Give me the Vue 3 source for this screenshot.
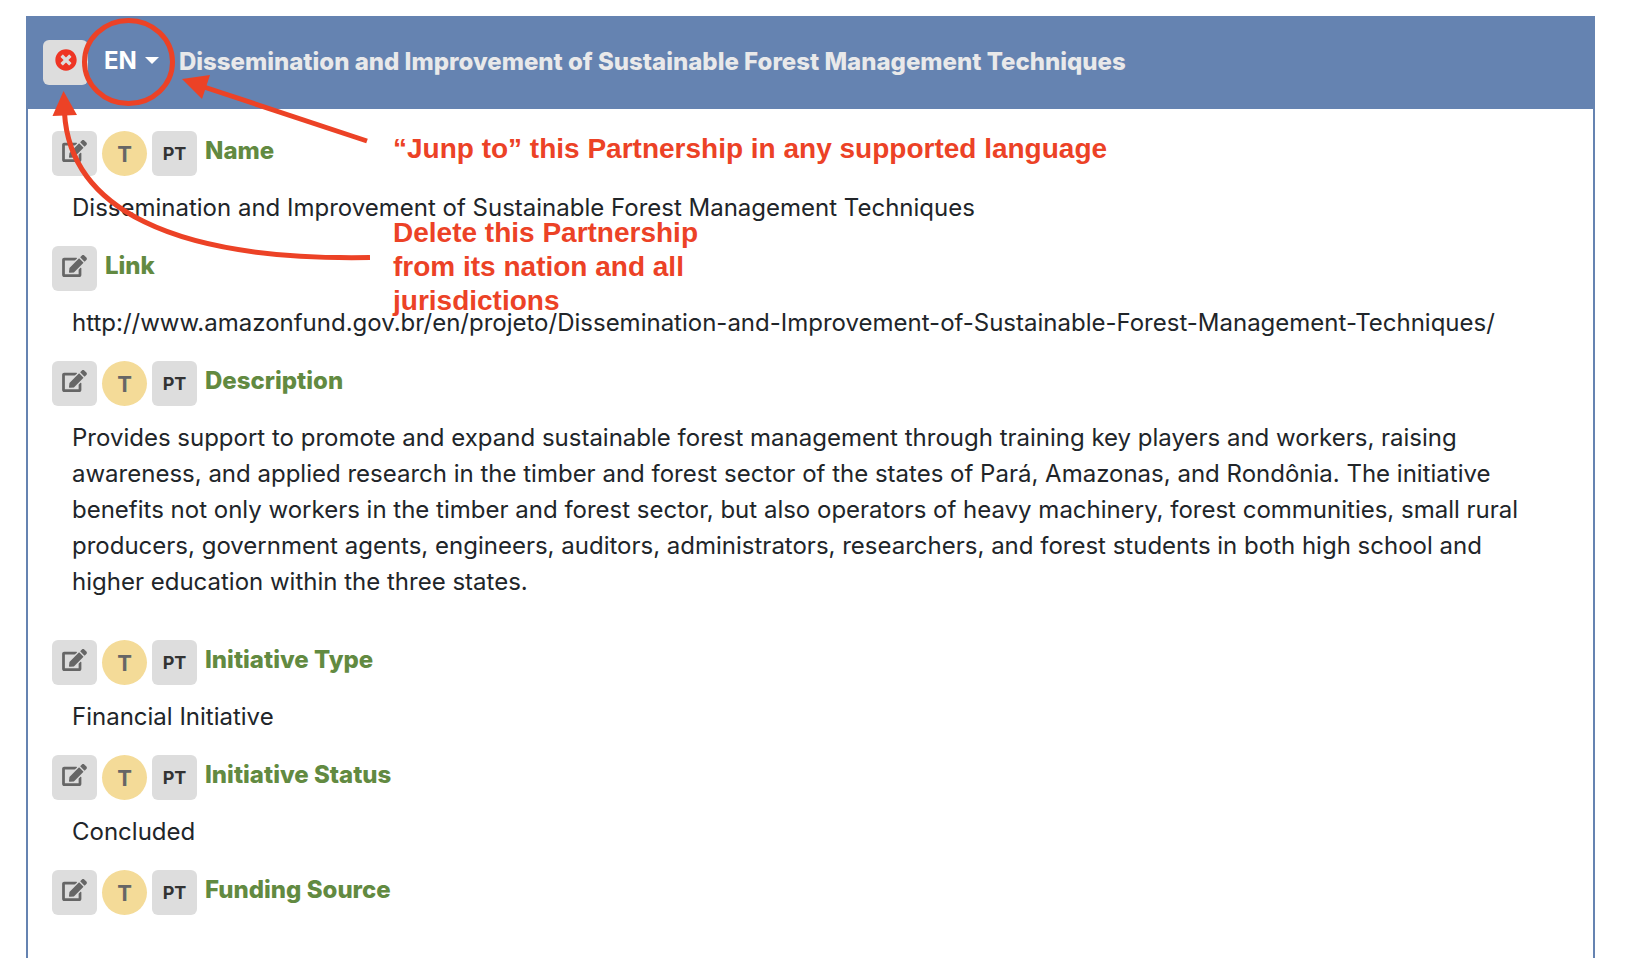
<script setup>
const title = 'Dissemination and Improvement of Sustainable Forest Management Techniques'
const link = 'http://www.amazonfund.gov.br/en/projeto/Dissemination-and-Improvement-of-Sustainable-Forest-Management-Techniques/'

const fields = [
  { label: 'Name', value: title, translatable: true },
  { label: 'Link', value: link, href: link },
  {
    label: 'Description',
    translatable: true,
    long: true,
    value:
      'Provides support to promote and expand sustainable forest management through training key players and workers, raising awareness, and applied research in the timber and forest sector of the states of Pará, Amazonas, and Rondônia. The initiative benefits not only workers in the timber and forest sector, but also operators of heavy machinery, forest communities, small rural producers, government agents, engineers, auditors, administrators, researchers, and forest students in both high school and higher education within the three states.',
  },
  { label: 'Initiative Type', value: 'Financial Initiative', translatable: true },
  { label: 'Initiative Status', value: 'Concluded', translatable: true },
  { label: 'Funding Source', value: '', translatable: true },
]
</script>

<template>
  <main class="page">
    <article class="card">
      <header class="card-header">
        <button type="button" class="tool" aria-label="Delete partnership">
          <svg class="delete-icon" viewBox="0 0 512 512" aria-hidden="true">
            <path d="M256 8C119 8 8 119 8 256s111 248 248 248 248-111 248-248S393 8 256 8zm121.6 313.1c4.7 4.7 4.7 12.3 0 17L338 377.6c-4.7 4.7-12.3 4.7-17 0L256 312l-65.1 65.6c-4.7 4.7-12.3 4.7-17 0L134.4 338c-4.7-4.7-4.7-12.3 0-17l65.6-65-65.6-65.1c-4.7-4.7-4.7-12.3 0-17l39.6-39.6c4.7-4.7 12.3-4.7 17 0l65 65.7 65.1-65.6c4.7-4.7 12.3-4.7 17 0l39.6 39.6c4.7 4.7 4.7 12.3 0 17L312 256l65.6 65.1z" />
          </svg>
        </button>
        <button type="button" class="language" aria-haspopup="menu">EN<span class="caret"></span></button>
        <h1 class="title">{{ title }}</h1>
      </header>

      <div class="card-body">
        <section v-for="field in fields" :key="field.label" class="field" :class="{ long: field.long }">
          <div class="field-head">
            <button type="button" class="tool" :aria-label="'Edit ' + field.label">
              <svg class="edit-icon" viewBox="0 0 576 512" aria-hidden="true">
                <path d="M402.6 83.2l90.2 90.2c3.8 3.8 3.8 10 0 13.8L274.4 405.6l-92.8 10.3c-12.4 1.4-22.9-9.1-21.5-21.5l10.3-92.8L388.8 83.2c3.8-3.8 10-3.8 13.8 0zm162-22.9l-48.8-48.8c-15.2-15.2-39.9-15.2-55.2 0l-35.4 35.4c-3.8 3.8-3.8 10 0 13.8l90.2 90.2c3.8 3.8 10 3.8 13.8 0l35.4-35.4c15.2-15.3 15.2-40 0-55.2zM384 346.2V448H64V128h229.8c3.2 0 6.2-1.3 8.5-3.5l40-40c7.6-7.6 2.2-20.5-8.5-20.5H48C21.5 64 0 85.5 0 112v352c0 26.5 21.5 48 48 48h352c26.5 0 48-21.5 48-48V306.2c0-10.7-12.9-16-20.5-8.5l-40 40c-2.2 2.3-3.5 5.3-3.5 8.5z" />
              </svg>
            </button>
            <template v-if="field.translatable">
              <button type="button" class="tool translate">T</button>
              <button type="button" class="tool code">PT</button>
            </template>
            <h2 class="label">{{ field.label }}</h2>
          </div>
          <p v-if="field.value" class="value">
            <a v-if="field.href" :href="field.href">{{ field.value }}</a>
            <template v-else>{{ field.value }}</template>
          </p>
        </section>
      </div>
    </article>

    <svg class="marks" width="400" height="280" viewBox="0 0 400 280" aria-hidden="true">
      <g fill="none" stroke="#ec4226" stroke-width="5">
        <ellipse cx="128.500" cy="62" rx="44" ry="41.500" />
        <path d="M367 141L204 87" />
        <path d="M370 257.500C170 261 70 207 64.500 113" />
      </g>
      <g fill="#ec4226">
        <path d="M182 79L210 75L202 99Z" />
        <path d="M63.500 91L52.500 116L77 115Z" />
      </g>
    </svg>
    <p class="note note-jump">“Junp to” this Partnership in any supported language</p>
    <p class="note note-delete">Delete this Partnership from its nation and all jurisdictions</p>
  </main>
</template>

<style>
body {
  margin: 0;
  background: #fff;
}
</style>

<style scoped>
.page {
  position: relative;
  box-sizing: border-box;
  height: 100vh;
  overflow: hidden;
  padding: 16px 35px 0 26px;
  font-family: Inter, "Liberation Sans", sans-serif;
  font-size: 24px;
  line-height: 36px;
  color: #212529;
}

.card {
  box-sizing: border-box;
  min-height: 100vh;
  border: 2px solid #6583b1;
}

.card-header {
  display: flex;
  align-items: center;
  padding: 22px 15px 24px;
  background: #6583b1;
}

.tool {
  display: flex;
  flex: none;
  align-items: center;
  justify-content: center;
  width: 45px;
  height: 45px;
  padding: 0 0 5px;
  border: 0;
  border-radius: 6px;
  background: #ddd;
  color: #666;
  font: inherit;
  font-weight: 700;
}

.delete-icon {
  width: 22px;
  height: 22px;
  fill: #ee3524;
}

.edit-icon {
  width: 25px;
  height: 22px;
  fill: #666;
}

.language {
  display: flex;
  flex: none;
  align-items: center;
  gap: 8px;
  margin: 0 20px 0 16px;
  padding: 0 0 4px;
  border: 0;
  background: none;
  color: #fff;
  font: inherit;
  font-weight: 700;
}

.caret {
  border: 7px solid transparent;
  border-top-color: #fff;
  border-bottom: 0;
}

.title {
  margin: 0;
  padding-bottom: 2px;
  color: #e9e9ea;
  font-size: 24px;
  font-weight: 800;
}

.card-body {
  padding: 22px 45px 0 24px;
}

.field {
  margin-bottom: 20px;
}

.field.long {
  margin-bottom: 40px;
}

.field-head {
  display: flex;
  align-items: center;
  gap: 5px;
}

.translate {
  padding: 0;
  border-radius: 50%;
  background: #f4db98;
  font-size: 22px;
}

.code {
  padding: 0;
  color: #333;
  font-size: 18px;
}

.label {
  margin: 0 0 0 3px;
  padding-bottom: 5px;
  color: #628a41;
  font-size: 24px;
  font-weight: 800;
}

.value {
  margin: 14px 0 0;
  padding-left: 20px;
}

.value a {
  color: inherit;
  text-decoration: none;
}

.marks {
  position: absolute;
  top: 0;
  left: 0;
  pointer-events: none;
}

.note {
  position: absolute;
  left: 393px;
  margin: 0;
  color: #ec4226;
  font-family: "Liberation Sans", Arial, sans-serif;
  font-size: 28px;
  font-weight: 700;
  line-height: 34px;
}

.note-jump {
  top: 132px;
}

.note-delete {
  top: 216px;
  width: 320px;
}
</style>
